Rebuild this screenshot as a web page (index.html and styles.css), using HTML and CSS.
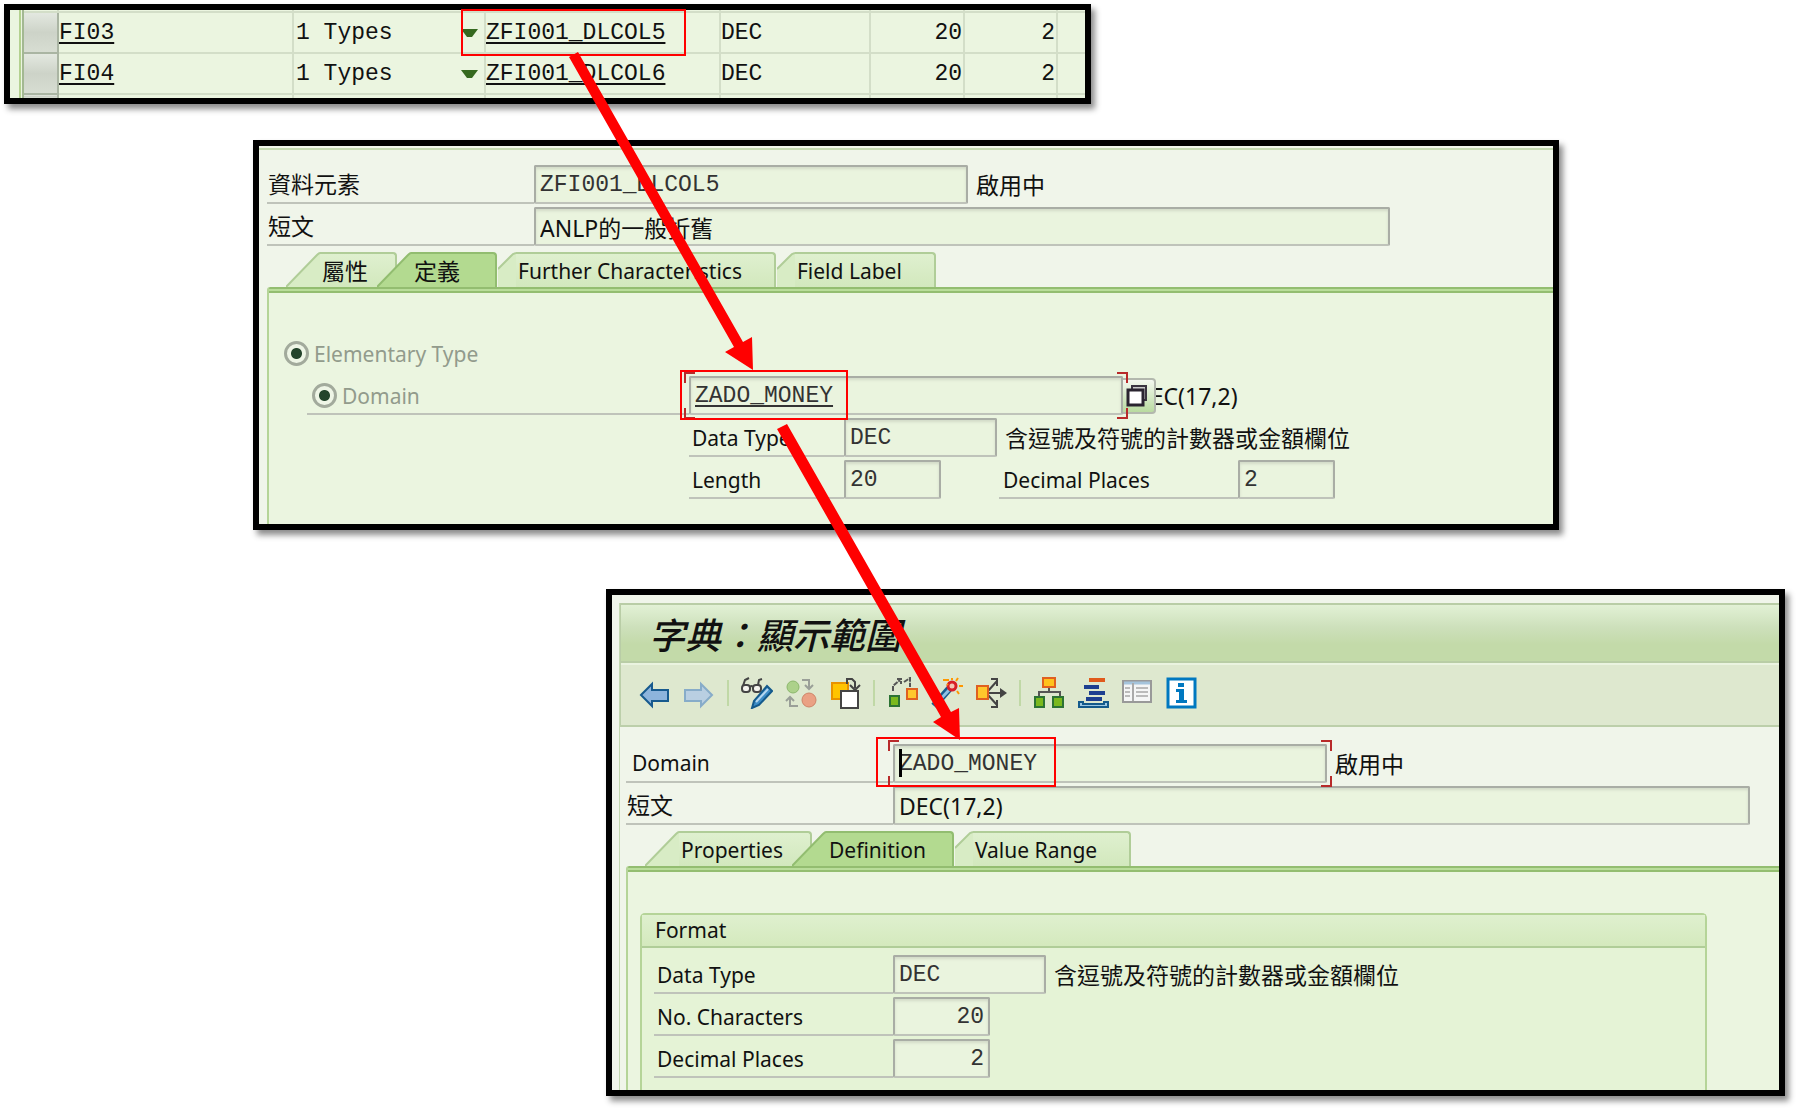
FILE: index.html
```html
<!DOCTYPE html>
<html lang="zh-Hant">
<head>
<meta charset="utf-8">
<title>ZADO_MONEY</title>
<link rel="stylesheet" href="styles.css">
</head>
<body>
<main class="board">

  <section class="shot shot-structure">
    <table class="components">
      <colgroup>
        <col class="c-edge"><col class="c-pick"><col class="c-name"><col class="c-kind"><col class="c-type"><col class="c-dtype"><col class="c-len"><col class="c-dec"><col>
      </colgroup>
      <tbody>
        <tr class="cut"><td></td><td></td><td></td><td></td><td></td><td></td><td></td><td></td><td></td></tr>
        <tr>
          <td></td><td class="pick"></td>
          <td><a href="#fi03">FI03</a></td>
          <td><div class="kind"><select aria-label="FI03"><option>1 Types</option></select><svg width="17" height="9" viewBox="0 0 17 9"><path d="M0 0H17L11 8H6Z" fill="#35691f"/></svg></div></td>
          <td><a href="#dlcol5">ZFI001_DLCOL5</a></td>
          <td>DEC</td><td class="num">20</td><td class="num">2</td><td></td>
        </tr>
        <tr>
          <td></td><td class="pick"></td>
          <td><a href="#fi04">FI04</a></td>
          <td><div class="kind"><select aria-label="FI04"><option>1 Types</option></select><svg width="17" height="9" viewBox="0 0 17 9"><path d="M0 0H17L11 8H6Z" fill="#35691f"/></svg></div></td>
          <td><a href="#dlcol6">ZFI001_DLCOL6</a></td>
          <td>DEC</td><td class="num">20</td><td class="num">2</td><td></td>
        </tr>
        <tr class="cut"><td></td><td class="pick"></td><td></td><td></td><td></td><td></td><td></td><td></td><td></td></tr>
      </tbody>
    </table>
  </section>

  <section class="shot shot-element">
    <div class="fields">
      <div class="row">
        <label class="lbl lbl-wide" for="de-name">資料元素</label>
        <input class="box mono w-name" id="de-name" value="ZFI001_DLCOL5" readonly>
        <span class="note">啟用中</span>
      </div>
      <div class="row">
        <label class="lbl lbl-wide" for="de-text">短文</label>
        <input class="box w-text" id="de-text" value="ANLP的一般折舊" readonly>
      </div>
    </div>
    <div class="tabs" role="tablist">
      <button class="tab first cjk" role="tab"><svg class="slope" width="34" height="35"><path d="M0 35L31 3Q33 1 34 1V35Z" fill="#d8ecc5"/><path d="M0 35L31 3Q33 1 34 1" fill="none" stroke="#b0cd98" stroke-width="2"/></svg><span>屬性</span></button>
      <button class="tab active cjk" role="tab" aria-selected="true"><svg class="slope" width="34" height="35"><path d="M0 35L31 3Q33 1 34 1V35Z" fill="#b3da90"/><path d="M0 35L31 3Q33 1 34 1" fill="none" stroke="#92bd70" stroke-width="2"/></svg><span>定義</span></button>
      <button class="tab" role="tab"><svg class="slope" width="18" height="35"><path d="M0 17L15 2L18 1V35H0Z" fill="#d8ecc5"/><path d="M0 17L15 2L18 1" fill="none" stroke="#b0cd98" stroke-width="2"/></svg><span>Further Characteristics</span></button>
      <button class="tab" role="tab"><svg class="slope" width="18" height="35"><path d="M0 17L15 2L18 1V35H0Z" fill="#d8ecc5"/><path d="M0 17L15 2L18 1" fill="none" stroke="#b0cd98" stroke-width="2"/></svg><span>Field Label</span></button>
    </div>
    <div class="sheet sheet-element">
      <div class="row type-row">
        <input type="radio" id="r-elem" name="kind" checked disabled>
        <label for="r-elem">Elementary Type</label>
      </div>
      <div class="row domain-row">
        <div class="lbl lbl-domain">
          <input type="radio" id="r-domain" name="category" checked disabled>
          <label for="r-domain">Domain</label>
        </div>
        <div class="focus w-name"><input class="box mono link" aria-label="Domain" value="ZADO_MONEY" readonly></div>
        <button class="match" aria-label="Search"><svg width="26" height="26" viewBox="0 0 26 26"><path d="M8 8V3H22V17H18" fill="#ccc" stroke="#3a3440" stroke-width="2"/><rect x="4" y="7" width="15" height="15" fill="#fff" stroke="#2a2430" stroke-width="3"/></svg></button>
        <span class="behind">DEC(17,2)</span>
      </div>
      <div class="row sub-row">
        <label class="lbl lbl-sub" for="de-type">Data Type</label>
        <input class="box mono w-type" id="de-type" value="DEC" readonly>
        <span class="note">含逗號及符號的計數器或金額欄位</span>
      </div>
      <div class="row sub-row">
        <label class="lbl lbl-sub" for="de-len">Length</label>
        <input class="box mono w-num" id="de-len" value="20" readonly>
        <label class="lbl lbl-dec" for="de-dec">Decimal Places</label>
        <input class="box mono w-num" id="de-dec" value="2" readonly>
      </div>
    </div>
  </section>

  <section class="shot shot-domain">
    <div class="app">
      <h1 class="title">字典：顯示範圍</h1>
      <div class="toolbar" role="toolbar">
        <button aria-label="Back"><svg viewBox="0 0 32 32"><path d="M2 18L13 7V13H29V24H13V29Z" fill="#8db4dc" stroke="#175a8e" stroke-width="2"/></svg></button>
        <button aria-label="Forward"><svg viewBox="0 0 32 32"><path d="M29 18L18 7V13H2V24H18V29Z" fill="#b9cfe2" stroke="#87acc9" stroke-width="2"/></svg></button>
        <i class="sep"></i>
        <button aria-label="Display / Change"><svg viewBox="0 0 32 32"><g fill="#f4f4ee" stroke="#444" stroke-width="2"><path d="M2 9L4 3L8 1M17 8L18 3L21 2" fill="none"/><rect x="1" y="8" width="8" height="7" rx="3"/><rect x="12" y="8" width="8" height="7" rx="3"/><path d="M9 10Q10 8 12 10" fill="none"/></g><path d="M11 31L13 24L26 9L31 14L18 28Z" fill="#3d8dc6" stroke="#145a8c" stroke-width="2"/><path d="M15 25L27 12" stroke="#b5d7ef" stroke-width="2"/></svg></button>
        <button aria-label="Active / Inactive"><svg viewBox="0 0 32 32"><circle cx="8" cy="10" r="6" fill="#acd18a" stroke="#8cb86c"/><circle cx="24" cy="23" r="7" fill="#eaa184" stroke="#cf8468"/><path d="M17 3H24V11M20 8L24 12L28 8M13 29H5V21M1 24L5 20L9 24" fill="none" stroke="#9a9f98" stroke-width="2"/></svg></button>
        <button aria-label="Other object"><svg viewBox="0 0 32 32"><rect x="3" y="6" width="16" height="16" fill="#ffc400" stroke="#e89200" stroke-width="2"/><path d="M18 7V2H23L26 5V11M21 8L26 13L31 8" fill="none" stroke="#444" stroke-width="2"/><rect x="12" y="14" width="17" height="17" fill="#fff" stroke="#444" stroke-width="2"/></svg></button>
        <i class="sep"></i>
        <button aria-label="Check"><svg viewBox="0 0 32 32"><path d="M6 14V9L13 3M10 2H14V7M17 5L23 1V10" fill="none" stroke="#555" stroke-width="2" stroke-dasharray="5 1"/><rect x="3" y="19" width="9" height="10" fill="#7ab91e" stroke="#2c7334" stroke-width="2"/><rect x="20" y="12" width="10" height="10" fill="#ffc72c" stroke="#e06020" stroke-width="2"/></svg></button>
        <button aria-label="Activate"><svg viewBox="0 0 32 32"><path d="M3 29L18 12" stroke="#175a8e" stroke-width="7"/><path d="M4 28L18 13" stroke="#8fc0e4" stroke-width="3"/><circle cx="21" cy="9" r="4" fill="#f5c5b5" stroke="#d81e28" stroke-width="3"/><path d="M12 3H18M21 1V3M27 1L25 4M28 9H32M26 14L28 17M16 7L17 8" stroke="#ff9800" stroke-width="2"/></svg></button>
        <button aria-label="Where-used list"><svg viewBox="0 0 32 32"><path d="M12 16H29M13 14L22 4M13 18L22 28M16 2H22V9M16 30H22V23" fill="none" stroke="#444" stroke-width="2"/><path d="M25 11L32 16L25 21Z" fill="#444"/><rect x="2" y="9" width="11" height="13" fill="#ffc72c" stroke="#e06020" stroke-width="2"/></svg></button>
        <i class="sep"></i>
        <button aria-label="Hierarchy"><svg viewBox="0 0 32 32"><path d="M16 10V15M6 20V15H27V20" fill="none" stroke="#555" stroke-width="2"/><rect x="10" y="1" width="12" height="9" fill="#ffc21c" stroke="#e06020" stroke-width="2"/><rect x="2" y="20" width="9" height="10" fill="#7ab91e" stroke="#2c7334" stroke-width="2"/><rect x="20" y="20" width="10" height="10" fill="#7ab91e" stroke="#2c7334" stroke-width="2"/></svg></button>
        <button aria-label="Object list"><svg viewBox="0 0 32 32"><rect x="12" y="1" width="16" height="4" fill="#e05a1c"/><path d="M7 8H22V12H7ZM12 14H28V18H12ZM9 20H25V24H9Z" fill="#1d3f90"/><path d="M2 30V25H6V27H27V25H31V30Z" fill="#9cc8e4" stroke="#145a8c" stroke-width="2"/></svg></button>
        <button aria-label="Append structure"><svg viewBox="0 0 32 32"><rect x="2" y="4" width="28" height="21" fill="#f5f6f6" stroke="#999" stroke-width="2"/><path d="M3 6H29" stroke="#a5c4dc" stroke-width="3"/><path d="M12 6V24" stroke="#aaa" stroke-width="2"/><path d="M4 11H9M4 15H9M4 19H9M15 11H27M15 15H27M15 19H27" stroke="#bbb" stroke-width="2"/></svg></button>
        <button aria-label="Information"><svg viewBox="0 0 32 32"><rect x="3" y="2" width="27" height="28" fill="#fff" stroke="#0078c0" stroke-width="3"/><path d="M13 6H19V10H13ZM11 12H19V23H22V26H11V23H14V15H11Z" fill="#0078c0"/></svg></button>
      </div>
      <div class="fields">
        <div class="row">
          <label class="lbl lbl-wide pad" for="do-name">Domain</label>
          <div class="focus caret w-name"><input class="box mono" id="do-name" value="ZADO_MONEY" readonly></div>
          <span class="note">啟用中</span>
        </div>
        <div class="row">
          <label class="lbl lbl-wide" for="do-text">短文</label>
          <input class="box w-text" id="do-text" value="DEC(17,2)" readonly>
        </div>
      </div>
      <div class="tabs" role="tablist">
        <button class="tab first" role="tab"><svg class="slope" width="34" height="35"><path d="M0 35L31 3Q33 1 34 1V35Z" fill="#d8ecc5"/><path d="M0 35L31 3Q33 1 34 1" fill="none" stroke="#b0cd98" stroke-width="2"/></svg><span>Properties</span></button>
        <button class="tab active" role="tab" aria-selected="true"><svg class="slope" width="34" height="35"><path d="M0 35L31 3Q33 1 34 1V35Z" fill="#b3da90"/><path d="M0 35L31 3Q33 1 34 1" fill="none" stroke="#92bd70" stroke-width="2"/></svg><span>Definition</span></button>
        <button class="tab" role="tab"><svg class="slope" width="18" height="35"><path d="M0 17L15 2L18 1V35H0Z" fill="#d8ecc5"/><path d="M0 17L15 2L18 1" fill="none" stroke="#b0cd98" stroke-width="2"/></svg><span>Value Range</span></button>
      </div>
      <div class="sheet sheet-domain">
        <fieldset class="group">
          <h2>Format</h2>
          <div class="row">
            <label class="lbl lbl-group" for="do-type">Data Type</label>
            <input class="box mono w-type" id="do-type" value="DEC" readonly>
            <span class="note">含逗號及符號的計數器或金額欄位</span>
          </div>
          <div class="row">
            <label class="lbl lbl-group" for="do-len">No. Characters</label>
            <input class="box mono w-num right" id="do-len" value="20" readonly>
          </div>
          <div class="row">
            <label class="lbl lbl-group" for="do-dec">Decimal Places</label>
            <input class="box mono w-num right" id="do-dec" value="2" readonly>
          </div>
        </fieldset>
      </div>
    </div>
  </section>

  <svg class="marks" width="1070" height="800" viewBox="0 0 1070 800" aria-hidden="true">
    <g fill="none" stroke="#f00" stroke-width="2">
      <rect x="462" y="10" width="223" height="45"/>
      <rect x="681" y="371" width="166" height="48"/>
      <rect x="877" y="738" width="178" height="48"/>
    </g>
    <g fill="#f00">
      <path d="M569 57L578 52L743 342L752 337L753 370L725 352L734 347Z"/>
      <path d="M777 429L787 424L951 712L959 708L960 740L933 722L941 717Z"/>
    </g>
  </svg>
</main>
</body>
</html>
```

FILE: styles.css
```css
* { box-sizing: border-box; }

body {
  margin: 0;
  background: #fff;
  color: #111;
  font-family: "Noto Sans", "Noto Sans CJK TC", sans-serif;
  font-size: 21px;
  line-height: 30px;
}

.board {
  position: relative;
  min-width: 1500px;
  padding: 4px 13px 14px 4px;
}

.marks {
  position: absolute;
  left: 0;
  top: 0;
  z-index: 5;
  pointer-events: none;
}

/* framed windows */
.shot {
  border: 6px solid #000;
  background: #f0f5ea;
  box-shadow: 4px 5px 6px rgba(0, 0, 0, .45);
  overflow: hidden;
}
.shot-structure { margin-right: 694px; background: #ebf5e0; }
.shot-element { margin: 36px 226px 0 249px; padding-left: 8px; }
.shot-domain { margin: 59px 0 0 602px; padding: 8px 0 0 7px; }

/* component table */
.components {
  width: 100%;
  table-layout: fixed;
  border-collapse: separate;
  border-spacing: 0;
  font-family: "Liberation Mono", monospace;
  font-size: 23px;
  line-height: 38px;
}
.c-edge { width: 14px; }
.c-pick { width: 35px; }
.c-name { width: 235px; }
.c-kind { width: 192px; }
.c-type { width: 235px; }
.c-dtype { width: 150px; }
.c-len { width: 94px; }
.c-dec { width: 93px; }
.components td {
  height: 41px;
  padding: 1px 1px 0 0;
  border-right: 2px solid #d3dec8;
  border-bottom: 2px solid #d3dec8;
  white-space: nowrap;
  overflow: hidden;
}
.components .cut td { height: 3px; padding: 0; }
.components tr:last-child td { border-bottom: 0; }
.components td:first-child { border-right: 2px solid #a3b892; border-bottom: 0; background: linear-gradient(90deg, #ebf5e0 9px, #b4d190 9px 11px, #ebf5e0 11px); }
.components td:last-child { border-right: 0; }
.components .pick {
  border-color: #aab5a3;
  background: linear-gradient(#e3e8e0, #cdd3c8 50%, #d7ddd2);
}
.components a { color: inherit; text-underline-offset: 3px; text-decoration-thickness: 2px; }
.num { text-align: right; }
.kind { display: flex; align-items: center; padding: 0 5px 0 2px; }
.kind select {
  appearance: none;
  flex: 1;
  min-width: 0;
  padding: 0;
  border: 0;
  background: none;
  color: inherit;
  font: inherit;
}

/* form rows */
.row {
  display: flex;
  align-items: center;
  height: 39px;
  margin-bottom: 3px;
  white-space: nowrap;
}
.fields .row:last-child { margin-bottom: 0; }
.shot-element .fields {
  margin-left: -8px;
  padding: 17px 0 6px 8px;
  border-top: 2px solid #f0f5ea;
  box-shadow: inset 0 2px #c3d8b0;
}
.lbl {
  flex: none;
  height: 39px;
  padding: 5px 0 0 3px;
  border-bottom: 2px solid #bfc3ba;
  overflow: hidden;
}
.note, .fields .lbl { font-size: 23px; }
.lbl-wide { width: 267px; padding: 4px 0 0 1px; }
.fields .lbl.pad { padding-left: 6px; font-size: 21px; }
.lbl-sub { width: 155px; }
.lbl-dec { width: 239px; margin-left: 58px; padding-left: 4px; }
.lbl-group { width: 239px; }
.note { padding-left: 8px; }

.box {
  flex: none;
  height: 39px;
  padding: 0 4px;
  border: 2px solid #a9ada5;
  border-bottom-color: #bfc3ba;
  border-radius: 2px;
  background: #eaf4de;
  box-shadow: inset 0 2px 3px #d2dac8;
  color: #111;
  font-family: inherit;
  font-size: 23px;
  outline: 0;
}
.box.mono { font-family: "Liberation Mono", monospace; color: #333; }
.box.link { text-decoration: underline; text-underline-offset: 3px; }
.box.right { text-align: right; }
.w-name { width: 434px; }
.w-text { flex: 1; margin-right: 163px; }
.shot-domain .w-text { margin-right: 29px; }
.w-type { width: 153px; }
.w-num { width: 97px; }

/* red corner brackets round the focused field */
.focus { position: relative; flex: none; z-index: 2; }
.focus .box { width: 100%; }
.focus::before {
  content: "";
  position: absolute;
  inset: -4px -5px;
  pointer-events: none;
  background:
    linear-gradient(#b82a2a, #b82a2a) 0 0 / 11px 2px,
    linear-gradient(#b82a2a, #b82a2a) 0 0 / 2px 11px,
    linear-gradient(#b82a2a, #b82a2a) 100% 0 / 11px 2px,
    linear-gradient(#b82a2a, #b82a2a) 100% 0 / 2px 11px,
    linear-gradient(#b82a2a, #b82a2a) 0 100% / 11px 2px,
    linear-gradient(#b82a2a, #b82a2a) 0 100% / 2px 11px,
    linear-gradient(#b82a2a, #b82a2a) 100% 100% / 11px 2px,
    linear-gradient(#b82a2a, #b82a2a) 100% 100% / 2px 11px;
  background-repeat: no-repeat;
}
.caret::after {
  content: "";
  position: absolute;
  left: 6px;
  top: 5px;
  width: 3px;
  height: 28px;
  background: #000;
}

.match {
  position: relative;
  z-index: 1;
  flex: none;
  width: 33px;
  height: 36px;
  padding: 3px 1px;
  border: 2px solid #b3b8ae;
  border-left: 0;
  border-radius: 0 4px 4px 0;
  background: linear-gradient(#f4f8f0, #b9dba0);
}
.match svg { display: block; }
.behind { margin-left: -22px; font-size: 23px; }

/* tabs */
.tabs { display: flex; height: 35px; padding-left: 19px; }
.tab {
  display: flex;
  flex: none;
  margin: 0 0 0 1px;
  padding: 0;
  border: 0;
  background: none;
  color: #111;
  font: inherit;
}
.tab.cjk { font-size: 23px; }
.tab.first { margin-left: 0; }
.tab.active { margin-left: -20px; z-index: 1; }
.slope { display: block; flex: none; }
.tab span {
  height: 35px;
  padding: 0 32px 0 2px;
  border: solid #b0cd98;
  border-width: 2px 2px 0 0;
  border-radius: 0 4px 0 0;
  background: linear-gradient(#dff0cf, #d2e8bd);
  line-height: 35px;
  text-align: left;
}
.tab.first span { padding-right: 27px; }
.tab.active span {
  min-width: 86px;
  padding: 0 26px 0 3px;
  border-color: #92bd70;
  background: #b3da90;
}
.sheet {
  border-left: 2px solid #b5d498;
  border-radius: 3px 0 0 0;
  background: linear-gradient(#93bd70 2px, #b9dd9a 2px 4px, #93bd70 4px 6px, #ebf5e0 6px);
}
.sheet-element { padding: 47px 0 22px; }
.type-row { padding-left: 15px; color: #929b8c; }
.domain-row label { color: #929b8c; }
.domain-row { padding-left: 38px; }
.lbl-domain { display: flex; align-items: center; width: 382px; padding: 2px 0 0 5px; }
.sub-row { padding-left: 420px; }

input[type="radio"] {
  appearance: none;
  flex: none;
  width: 25px;
  height: 25px;
  margin: 0 5px 0 0;
  border: 3px solid #a2aa9c;
  border-radius: 50%;
  background: radial-gradient(circle, #24442c 5px, #eef5e6 6px);
}

/* domain window */
.app { border-left: 1px solid #c3d8b0; }
.title {
  height: 60px;
  margin: 0;
  padding: 6px 0 0 28px;
  border: solid #b9cda6;
  border-width: 2px 0 2px 1px;
  background: linear-gradient(#e2f1d5, #cde0bb 40%, #c3daa9 70%, #c3daa9);
  font-family: "Noto Sans CJK TC", sans-serif;
  font-size: 36px;
  font-style: italic;
  font-weight: 500;
  line-height: 44px;
}
.toolbar {
  display: flex;
  align-items: center;
  gap: 12px;
  height: 64px;
  padding: 0 0 2px 18px;
  border: solid #bccfaa;
  border-width: 0 0 2px 1px;
  background: #dee8cf;
  box-shadow: inset 0 2px #eaf3e0;
}
.toolbar button { flex: none; width: 32px; height: 32px; padding: 0; border: 0; background: none; }
.toolbar svg { display: block; width: 32px; height: 32px; }
.sep { width: 2px; height: 26px; background: #c0d8a6; }
.shot-domain .fields { padding: 17px 0 6px 6px; }
.shot-domain .tabs { padding-left: 25px; }
.shot-domain .sheet { margin-left: 6px; }
.sheet-domain { padding: 47px 72px 0 12px; }
.group {
  min-width: 0;
  margin: 0;
  padding: 0 0 9px;
  border: 2px solid #b5d498;
  border-bottom: 0;
  border-radius: 5px 5px 0 0;
  background: #e5f3d6;
}
.group h2 {
  height: 33px;
  margin: 0 0 7px;
  padding: 0 13px;
  border-bottom: 2px solid #b0cd98;
  background: linear-gradient(#dff0cf, #d4e9bd);
  font-size: 21px;
  font-weight: 400;
  line-height: 30px;
}
.group .row { padding-left: 12px; }
```
